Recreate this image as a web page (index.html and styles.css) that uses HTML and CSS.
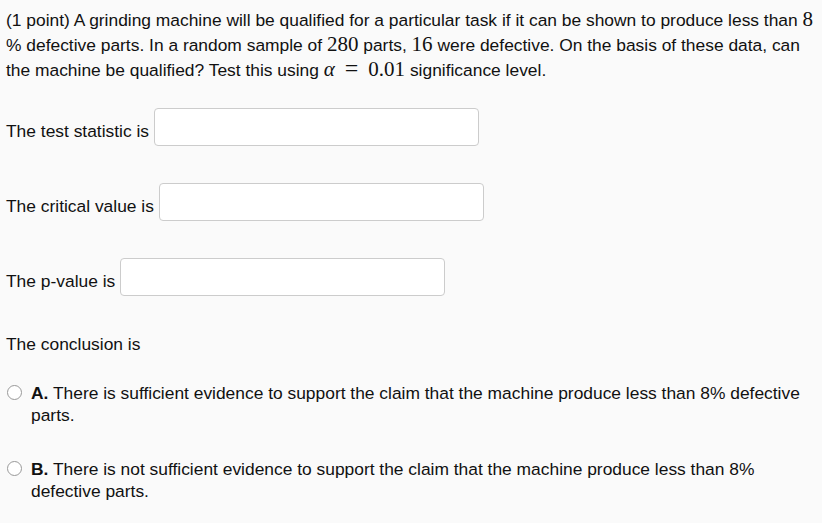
FILE: index.html
```html
<!DOCTYPE html>
<html>
<head>
<meta charset="utf-8">
<link rel="stylesheet" href="styles.css">
</head>
<body>
<div class="problem">
  <p class="intro">(1 point) A grinding machine will be qualified for a particular task if it can be shown to produce less than <span class="m">8</span> % defective parts. In a random sample of <span class="m">280</span> parts, <span class="m">16</span> were defective. On the basis of these data, can the machine be qualified? Test this using <span class="m"><i>α</i><span class="op">=</span>0.01</span> significance level.</p>

  <div class="row"><span class="row-label">The test statistic is</span><span class="field"></span></div>
  <div class="row"><span class="row-label">The critical value is</span><span class="field"></span></div>
  <div class="row"><span class="row-label">The p-value is</span><span class="field"></span></div>

  <p class="label">The conclusion is</p>

  <div class="option">
    <span class="radio"></span>
    <span class="opt-text"><b>A.</b> There is sufficient evidence to support the claim that the machine produce less than 8% defective parts.</span>
  </div>
  <div class="option">
    <span class="radio"></span>
    <span class="opt-text"><b>B.</b> There is not sufficient evidence to support the claim that the machine produce less than 8% defective parts.</span>
  </div>
</div>
</body>
</html>
```

FILE: styles.css
```css
html, body {
  margin: 0;
  padding: 0;
  background: #fafafa;
}
body {
  font-family: "Liberation Sans", Arial, sans-serif;
  font-size: 17.4px;
  color: #111;
}
.problem {
  padding: 8px 0 0 6px;
}
.intro {
  margin: 0;
  line-height: 25px;
  width: 814px;
}
.m {
  font-family: "Liberation Serif", "Times New Roman", serif;
  font-size: 21px;
  line-height: 0;
  white-space: nowrap;
}
.m i {
  font-style: italic;
  font-size: 21px;
}
.op {
  font-size: 24px;
  line-height: 0;
  padding: 0 10px;
}
.row {
  display: flex;
  align-items: flex-start;
  gap: 5px;
  margin-bottom: 37px;
}
.intro + .row {
  margin-top: 25px;
}
.row-label {
  margin-top: 13px;
  line-height: 20px;
}
.field {
  width: 323px;
  height: 36px;
  background: #fff;
  border: 1px solid #ccc;
  border-radius: 4px;
}
.label {
  margin: 0;
  padding-top: 1px;
  line-height: 20px;
}
.option {
  display: flex;
  align-items: flex-start;
  gap: 9px;
  margin-top: 28px;
  padding-left: 1px;
  line-height: 22px;
}
.option + .option {
  margin-top: 32px;
}
.radio {
  flex: none;
  width: 13px;
  height: 13px;
  margin-top: 3px;
  border: 1px solid #999;
  border-radius: 50%;
  background: #fff;
}
.opt-text {
  width: 784px;
}
```
